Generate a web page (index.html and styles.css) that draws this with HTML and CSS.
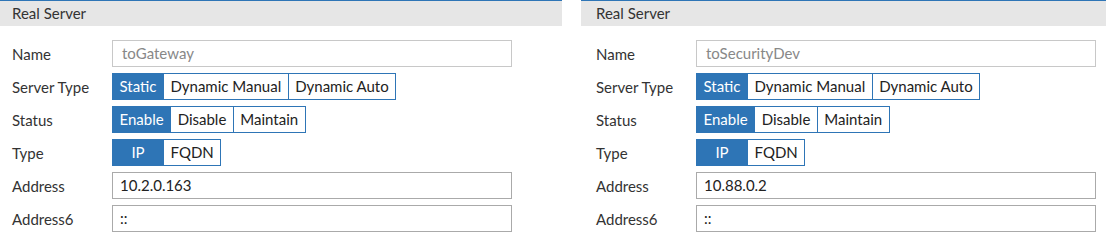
FILE: index.html
```html
<!DOCTYPE html>
<html>
<head>
<meta charset="utf-8">
<link rel="stylesheet" href="styles.css">
</head>
<body>
<div class="page">
  <section class="panel panel-left">
    <div class="panel-head">Real Server</div>
    <div class="form">
      <div class="row"><div class="label">Name</div><div class="input readonly">toGateway</div></div>
      <div class="row"><div class="label">Server Type</div>
        <div class="group"><span class="btn active">Static</span><span class="btn">Dynamic Manual</span><span class="btn">Dynamic Auto</span></div></div>
      <div class="row"><div class="label">Status</div>
        <div class="group"><span class="btn active">Enable</span><span class="btn">Disable</span><span class="btn">Maintain</span></div></div>
      <div class="row"><div class="label">Type</div>
        <div class="group"><span class="btn active wide">IP</span><span class="btn">FQDN</span></div></div>
      <div class="row"><div class="label">Address</div><div class="input">10.2.0.163</div></div>
      <div class="row"><div class="label">Address6</div><div class="input">::</div></div>
    </div>
  </section>
  <section class="panel panel-right">
    <div class="panel-head">Real Server</div>
    <div class="form">
      <div class="row"><div class="label">Name</div><div class="input readonly">toSecurityDev</div></div>
      <div class="row"><div class="label">Server Type</div>
        <div class="group"><span class="btn active">Static</span><span class="btn">Dynamic Manual</span><span class="btn">Dynamic Auto</span></div></div>
      <div class="row"><div class="label">Status</div>
        <div class="group"><span class="btn active">Enable</span><span class="btn">Disable</span><span class="btn">Maintain</span></div></div>
      <div class="row"><div class="label">Type</div>
        <div class="group"><span class="btn active wide">IP</span><span class="btn">FQDN</span></div></div>
      <div class="row"><div class="label">Address</div><div class="input">10.88.0.2</div></div>
      <div class="row"><div class="label">Address6</div><div class="input">::</div></div>
    </div>
  </section>
</div>
</body>
</html>
```
FILE: styles.css
```css
* { box-sizing: border-box; }
html, body { margin: 0; padding: 0; background: #fff; }
body { font-family: Lato, "Open Sans", sans-serif; font-size: 15px; color: #333; }
.page { display: flex; gap: 19px; }
.panel-left { width: 562px; --pad: 12px; }
.panel-right { width: 525px; --pad: 15px; }
.panel-head {
  border-top: 1px solid #2e75b6;
  background: #e6e6e6;
  height: 26px;
  line-height: 25px;
  padding-left: var(--pad);
  color: #333;
}
.form { padding: 14px 0 0 var(--pad); display: flex; flex-direction: column; gap: 6px; }
.row { display: flex; align-items: center; height: 27px; }
.label { width: 100px; flex: none; color: #333; }
.input {
  width: 400px; height: 27px; border: 1px solid #aaa;
  padding: 0 7px; line-height: 25px; color: #222;
}
.input.readonly { border-color: #c8c8c8; color: #888; padding-left: 9px; }
.group { display: flex; border: 1px solid #2e75b6; height: 27px; }
.btn { padding: 0 6.5px; line-height: 25px; color: #222; background: #fff; }
.btn + .btn { border-left: 1px solid #2e75b6; }
.btn.active { background: #2e75b6; color: #fff; }
.btn.wide { min-width: 50px; text-align: center; }
```
